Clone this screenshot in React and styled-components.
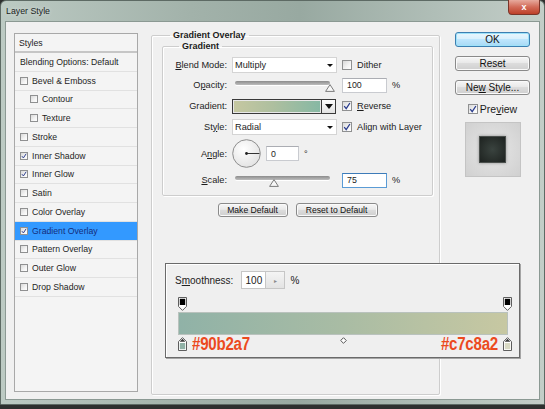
import React from 'react';
import styled, { createGlobalStyle } from 'styled-components';

const GlobalStyle = createGlobalStyle`
  html, body {
    margin: 0;
    padding: 0;
    background: #2b2d2c;
  }
  body {
    font-family: "Liberation Sans", Arial, sans-serif;
    color: #1c1c1c;
  }
`;

const Screen = styled.div`
  width: 545px;
  height: 409px;
  overflow: hidden;
  background: #2e302f;
`;

const Window = styled.div`
  width: 545px;
  height: 405px;
  box-sizing: border-box;
  display: flex;
  flex-direction: column;
  padding: 0 4px 4px;
  border: 1px solid #5d6a64;
  border-radius: 6px 6px 0 0;
  background: linear-gradient(90deg, #bccac3 0%, #a2b2aa 35%, #98a9a1 55%, #b0beb7 80%, #c3cec8 100%);
`;

const TitleBar = styled.div`
  height: 20px;
  flex: none;
  display: flex;
  align-items: flex-start;
  justify-content: space-between;
`;

const Title = styled.span`
  padding: 5px 0 0 1px;
  font-size: 8.8px;
  color: #1a1f1d;
  text-shadow: 0 0 4px rgba(255, 255, 255, 0.6);
`;

const CloseButton = styled.div`
  width: 32px;
  height: 15px;
  margin-top: -1px;
  box-sizing: border-box;
  display: flex;
  align-items: center;
  justify-content: center;
  border: 1px solid #7a3529;
  border-top: none;
  border-radius: 0 0 4px 4px;
  background: linear-gradient(180deg, #e7aa9d 0%, #d26b58 50%, #bd4029 100%);
  color: #fff;
  font-size: 9px;
  font-weight: bold;
`;

const Body = styled.div`
  flex: 1;
  position: relative;
  display: flex;
  padding: 8px 9px 4px 8px;
  border: 1px solid #8b9993;
  background: #f0f0f0;
`;

/* left list */

const StyleList = styled.div`
  width: 124px;
  flex: none;
  margin: 3px 13px 3px 0;
  box-sizing: border-box;
  display: flex;
  flex-direction: column;
  border: 1px solid #a8a8a8;
  background: #f4f4f4;
  font-size: 8.7px;
`;

const ListHeader = styled.div`
  height: 17px;
  display: flex;
  align-items: center;
  padding-left: 4px;
  border-bottom: 2px solid #c6c6c6;
`;

const ListRow = styled.div`
  height: 18.75px;
  box-sizing: border-box;
  display: flex;
  align-items: center;
  gap: 4px;
  padding-left: ${p => (p.$indent ? 15 : 5)}px;
  border-bottom: 1px solid #e1e1e1;
  background: ${p => (p.$active ? '#3399ff' : 'transparent')};
  color: ${p => (p.$active ? '#132d7c' : '#1e1e1e')};
`;

const Box = styled.span`
  width: ${p => p.$size}px;
  height: ${p => p.$size}px;
  flex: none;
  box-sizing: border-box;
  display: inline-flex;
  align-items: center;
  justify-content: center;
  border: 1px solid #8f9091;
  background: linear-gradient(135deg, #d9d9d9 0%, #f4f4f4 60%, #ffffff 100%);
`;

const CheckBox = ({ checked, size = 8 }) => (
  <Box $size={size}>
    {checked && (
      <svg width={size - 2} height={size - 2} viewBox="0 0 8 8">
        <path d="M1.2 4.2 L3.2 6.6 L6.9 1" fill="none" stroke="#2a3c8e" strokeWidth="1.3" />
      </svg>
    )}
  </Box>
);

/* middle */

const Group = styled.fieldset`
  margin: 0;
  min-width: 0;
  box-sizing: border-box;
  border: 1px solid #cdcdcd;
  border-radius: 2px;
  box-shadow: inset 1px 1px 0 #ffffff, 1px 1px 0 #ffffff;
`;

const OuterGroup = styled(Group)`
  width: 289px;
  flex: none;
  display: flex;
  flex-direction: column;
  padding: 1px 6px 0 10px;
`;

const InnerGroup = styled(Group)`
  padding: 6px 0 7px 0;
`;

const Legend = styled.legend`
  margin-left: ${p => p.$offset}px;
  padding: 0 3px;
  font-size: 9px;
  line-height: 10px;
  font-weight: bold;
  color: #1b1b1b;
`;

const FormGrid = styled.div`
  display: grid;
  grid-template-columns: 64px 105px 1fr;
  grid-template-rows: 16px 16px 18px 16px 29px 16px;
  column-gap: 5px;
  row-gap: 4px;
  align-items: center;
  font-size: 9.2px;
`;

const Label = styled.span`
  text-align: right;
  white-space: nowrap;
`;

const Select = styled.div`
  height: 16px;
  box-sizing: border-box;
  display: flex;
  align-items: center;
  justify-content: space-between;
  padding: 0 3px 0 2px;
  border: 1px solid #d4d4d4;
  background: #ffffff;
`;

const Arrow = styled.span`
  width: 0;
  height: 0;
  border-left: 3px solid transparent;
  border-right: 3px solid transparent;
  border-top: 3px solid #111;
`;

const Field = styled.div`
  display: flex;
  align-items: center;
  gap: 5px;
  white-space: nowrap;
`;

const Input = styled.div`
  width: ${p => p.$w}px;
  height: 15px;
  box-sizing: border-box;
  display: flex;
  align-items: center;
  padding-left: 4px;
  border: 1px solid ${p => (p.$focus ? '#5a9bd5' : '#c9cbd0')};
  border-top-color: ${p => (p.$focus ? '#3d7bb8' : '#abadb3')};
  background: #ffffff;
  font-size: 8.8px;
`;

const SliderTrack = styled.div`
  position: relative;
  width: 95px;
  height: 4px;
  margin: -4px 0 0 3px;
  border-radius: 2px;
  background: linear-gradient(180deg, #8c8c8c, #bdbdbd);
  box-shadow: 0 1px 0 #ffffff;
`;

const Thumb = styled.svg`
  position: absolute;
  top: 3px;
  margin-left: -5px;
`;

const Slider = ({ value }) => (
  <SliderTrack>
    <Thumb width="10" height="8" viewBox="0 0 10 8" style={{ left: `${value}%` }}>
      <path d="M5 0.6 L9.4 7.4 H0.6 Z" fill="#f7f7f7" stroke="#7c7c7c" />
    </Thumb>
  </SliderTrack>
);

const GradientPicker = styled.div`
  display: flex;
  height: 15px;
  width: 104px;
`;

const Swatch = styled.div`
  flex: 1;
  box-sizing: border-box;
  border: 1px solid #3a3a3a;
  box-shadow: inset 0 0 0 1px #e8e8e8;
  background: linear-gradient(90deg, #c6c8a1 0%, #aebf9f 45%, #86b8a4 100%);
`;

const DropButton = styled.div`
  width: 14px;
  box-sizing: border-box;
  display: flex;
  align-items: center;
  justify-content: center;
  border: 1px solid #3a3a3a;
  border-left: none;
  background: linear-gradient(180deg, #fdfdfd, #e2e2e2);

  span {
    border-left-width: 4px;
    border-right-width: 4px;
    border-top-width: 5px;
  }
`;

const Dial = styled.svg`
  flex: none;
`;

const ButtonRow = styled.div`
  display: flex;
  justify-content: center;
  gap: 8px;
  margin-top: 7px;
`;

const Button = styled.div`
  width: ${p => p.$w}px;
  height: ${p => p.$h || 14}px;
  box-sizing: border-box;
  display: flex;
  align-items: center;
  justify-content: center;
  border: 1px solid ${p => (p.$primary ? '#3c7fb1' : '#8a8a8a')};
  border-radius: 3px;
  background: ${p =>
    p.$primary
      ? 'linear-gradient(180deg, #eaf6fd 0%, #d9f0fc 45%, #bee6fd 50%, #a7d9f5 100%)'
      : 'linear-gradient(180deg, #f6f6f6 0%, #e9e9e9 45%, #dcdcdc 50%, #cfcfcf 100%)'};
  box-shadow: inset 0 0 0 1px ${p => (p.$primary ? '#9fe2f9' : '#fafafa')};
  font-size: ${p => p.$fs || 8.6}px;
  color: #111;
  white-space: nowrap;
`;

/* right column */

const SideColumn = styled.div`
  width: 75px;
  margin: 2px 0 0 15px;
  display: flex;
  flex-direction: column;
  align-items: center;
  gap: 9px;
`;

const PreviewToggle = styled.div`
  display: flex;
  align-items: center;
  gap: 2px;
  margin-top: -1px;
  font-size: 10.5px;
`;

const PreviewBox = styled.div`
  width: 56px;
  height: 55px;
  margin-top: -2px;
  display: flex;
  align-items: center;
  justify-content: center;
  box-sizing: border-box;
  border: 1px solid #c4c4c4;
  background: radial-gradient(circle, #e0e0e0 30%, #d0d0d0 100%);
`;

const PreviewSquare = styled.div`
  width: 27px;
  height: 27px;
  box-sizing: border-box;
  border: 1px solid #4a4f4c;
  background: radial-gradient(circle, #3a433f 0%, #262c29 70%, #1d2220 100%);
  box-shadow: 0 0 3px rgba(0, 0, 0, 0.35);
`;

/* gradient editor popup */

const Editor = styled.div`
  position: absolute;
  left: 159px;
  top: 241px;
  width: 355px;
  height: 95px;
  box-sizing: border-box;
  padding: 7px 11px 0 9px;
  border: 1px solid #6a6a6a;
  background: #efefef;
  box-shadow: 1px 1px 0 #a5a5a5, inset 1px 1px 0 #ffffff;
`;

const SmoothRow = styled.div`
  height: 18px;
  display: flex;
  align-items: center;
  font-size: 10px;
  color: #222;
`;

const SmoothInput = styled.div`
  width: 25px;
  height: 18px;
  margin-left: 8px;
  box-sizing: border-box;
  display: flex;
  align-items: center;
  justify-content: center;
  border: 1px solid #c6c6c6;
  background: #ffffff;
`;

const Spinner = styled.div`
  width: 19px;
  height: 18px;
  box-sizing: border-box;
  display: flex;
  align-items: center;
  justify-content: center;
  border: 1px solid #c6c6c6;
  border-left: none;
  background: linear-gradient(180deg, #f4f4f4, #e3e3e3);
  color: #8a8a8a;
  font-size: 6px;
`;

const Percent = styled.span`
  margin-left: 5px;
`;

const Ramp = styled.div`
  width: 330px;
  margin: 8px 0 0 3px;
`;

const StopRow = styled.div`
  position: relative;
  height: ${p => p.$h}px;
  display: flex;
  justify-content: space-between;
  align-items: flex-start;
`;

const Bar = styled.div`
  height: 23px;
  margin: 2px 0;
  box-sizing: border-box;
  border: 1px solid #b9c2bd;
  background: linear-gradient(90deg, #90b2a7 0%, #a9bca4 50%, #c7c8a2 100%);
`;

const StopGroup = styled.div`
  display: flex;
  align-items: flex-start;
  gap: 5px;
  margin: ${p => (p.$right ? '0 -4px 0 0' : '0')};
`;

const HexLabel = styled.span`
  display: inline-block;
  margin-top: -1px;
  font-size: 18px;
  line-height: 16px;
  font-weight: bold;
  color: #ec4a1e;
  letter-spacing: -0.3px;
  transform: scaleX(0.84);
  transform-origin: ${p => (p.$right ? 'right' : 'left')} center;
`;

const Midpoint = styled.svg`
  position: absolute;
  left: 50%;
  top: 0;
  margin-left: -3px;
`;

const ColorStop = ({ color, up }) =>
  up ? (
    <svg width="9" height="14" viewBox="0 0 9 14">
      <path d="M4.5 0.6 L8.5 4.6 V13.5 H0.5 V4.6 Z" fill="#ffffff" stroke="#5d5d5d" />
      <path d="M4.5 1.8 L7.4 4.8 H1.6 Z" fill="#3b3b3b" />
      <rect x="1.8" y="6" width="5.4" height="6.2" fill={color} />
    </svg>
  ) : (
    <svg width="9" height="14" viewBox="0 0 9 14">
      <path d="M0.5 0.5 H8.5 V9.4 L4.5 13.4 L0.5 9.4 Z" fill="#ffffff" stroke="#5d5d5d" />
      <rect x="1.8" y="1.8" width="5.4" height="6.2" fill="#000000" />
    </svg>
  );

const layerStyles = [
  { name: 'Bevel & Emboss' },
  { name: 'Contour', indent: true },
  { name: 'Texture', indent: true },
  { name: 'Stroke' },
  { name: 'Inner Shadow', checked: true },
  { name: 'Inner Glow', checked: true },
  { name: 'Satin' },
  { name: 'Color Overlay' },
  { name: 'Gradient Overlay', checked: true, active: true },
  { name: 'Pattern Overlay' },
  { name: 'Outer Glow' },
  { name: 'Drop Shadow' },
];

export default function App() {
  return (
    <Screen>
      <GlobalStyle />
      <Window>
        <TitleBar>
          <Title>Layer Style</Title>
          <CloseButton>x</CloseButton>
        </TitleBar>

        <Body>
          <StyleList>
            <ListHeader>Styles</ListHeader>
            <ListRow>Blending Options: Default</ListRow>
            {layerStyles.map(s => (
              <ListRow key={s.name} $indent={s.indent} $active={s.active}>
                <CheckBox checked={s.checked} />
                {s.name}
              </ListRow>
            ))}
          </StyleList>

          <OuterGroup>
            <Legend $offset={8}>Gradient Overlay</Legend>
            <InnerGroup>
              <Legend $offset={16}>Gradient</Legend>
              <FormGrid>
                <Label><u>B</u>lend Mode:</Label>
                <Select>Multiply<Arrow /></Select>
                <Field><CheckBox size={10} />Dither</Field>

                <Label>O<u>p</u>acity:</Label>
                <Slider value={100} />
                <Field><Input $w={45}>100</Input>%</Field>

                <Label>Gradient:</Label>
                <GradientPicker>
                  <Swatch />
                  <DropButton><Arrow /></DropButton>
                </GradientPicker>
                <Field><CheckBox size={10} checked /><span><u>R</u>everse</span></Field>

                <Label>St<u>y</u>le:</Label>
                <Select>Radial<Arrow /></Select>
                <Field><CheckBox size={10} checked />Align with Layer</Field>

                <Label>A<u>n</u>gle:</Label>
                <Field>
                  <Dial width="29" height="29" viewBox="0 0 29 29">
                    <defs>
                      <radialGradient id="dialFill" cx="40%" cy="35%" r="70%">
                        <stop offset="0" stopColor="#ffffff" />
                        <stop offset="1" stopColor="#e2e2e2" />
                      </radialGradient>
                    </defs>
                    <circle cx="14.5" cy="14.5" r="13.8" fill="url(#dialFill)" stroke="#8e8e8e" />
                    <line x1="14.5" y1="14.5" x2="27.5" y2="14.5" stroke="#333" strokeWidth="1" />
                    <circle cx="14.5" cy="14.5" r="1.4" fill="#222" />
                  </Dial>
                  <Input $w={33}>0</Input>
                  <span>°</span>
                </Field>
                <span />

                <Label><u>S</u>cale:</Label>
                <Slider value={41} />
                <Field><Input $w={45} $focus>75</Input>%</Field>
              </FormGrid>
            </InnerGroup>

            <ButtonRow>
              <Button $w={70}>Make Default</Button>
              <Button $w={82}>Reset to Default</Button>
            </ButtonRow>
          </OuterGroup>

          <SideColumn>
            <Button $w={75} $h={15} $fs={10} $primary>OK</Button>
            <Button $w={75} $h={15} $fs={10}>Reset</Button>
            <Button $w={75} $h={15} $fs={10}><span>Ne<u>w</u> Style...</span></Button>
            <PreviewToggle><CheckBox size={10} checked /><span>Pre<u>v</u>iew</span></PreviewToggle>
            <PreviewBox><PreviewSquare /></PreviewBox>
          </SideColumn>

          <Editor>
            <SmoothRow>
              <span>S<u>m</u>oothness:</span>
              <SmoothInput>100</SmoothInput>
              <Spinner>▸</Spinner>
              <Percent>%</Percent>
            </SmoothRow>
            <Ramp>
              <StopRow $h={13}>
                <ColorStop />
                <StopGroup $right><ColorStop /></StopGroup>
              </StopRow>
              <Bar />
              <StopRow $h={16}>
                <StopGroup>
                  <ColorStop up color="#90b2a7" />
                  <HexLabel>#90b2a7</HexLabel>
                </StopGroup>
                <Midpoint width="7" height="7" viewBox="0 0 7 7">
                  <path d="M3.5 0.7 L6.3 3.5 L3.5 6.3 L0.7 3.5 Z" fill="#ffffff" stroke="#555" />
                </Midpoint>
                <StopGroup $right>
                  <HexLabel $right>#c7c8a2</HexLabel>
                  <ColorStop up color="#d9dac4" />
                </StopGroup>
              </StopRow>
            </Ramp>
          </Editor>
        </Body>
      </Window>
    </Screen>
  );
}
